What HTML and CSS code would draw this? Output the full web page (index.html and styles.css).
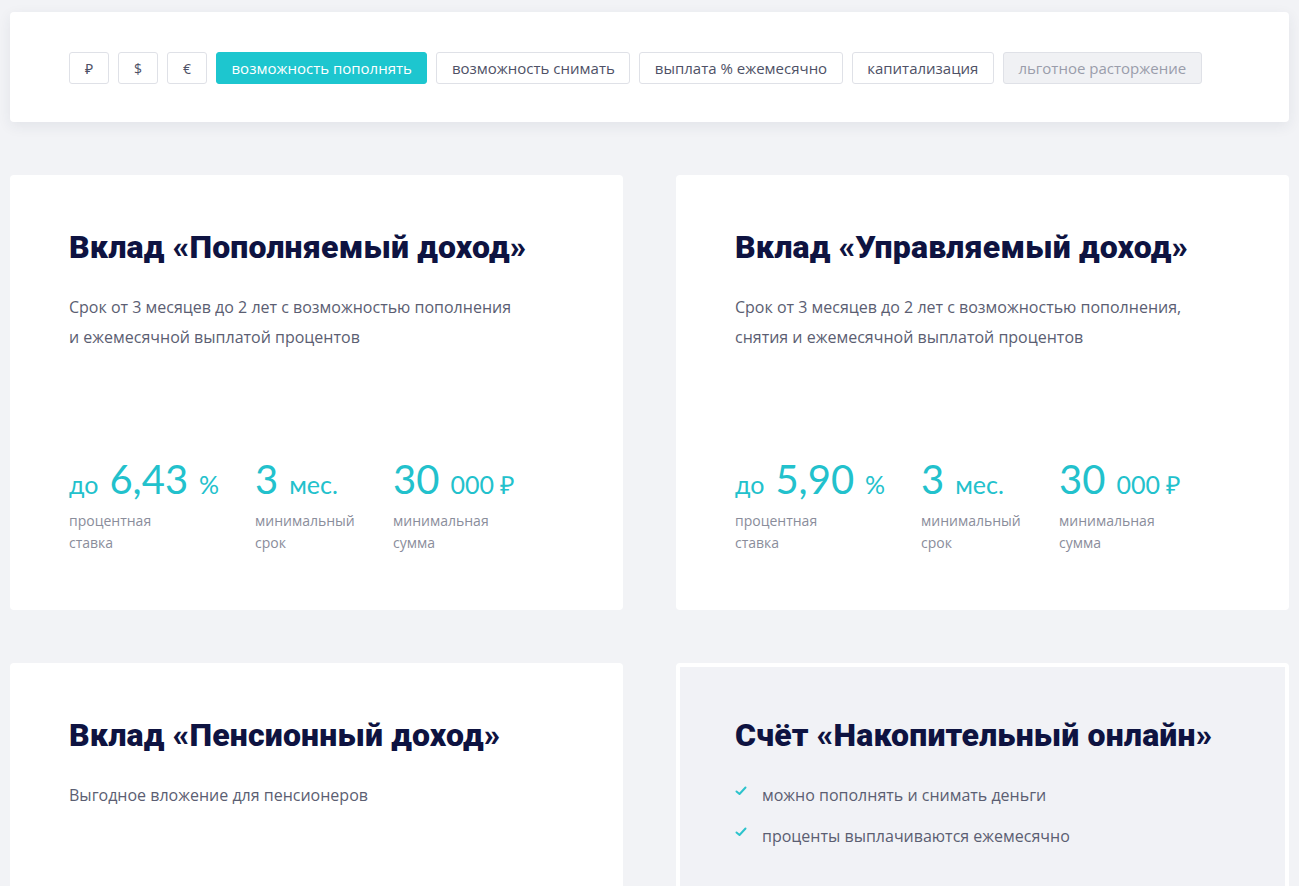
FILE: index.html
```html
<!DOCTYPE html>
<html lang="ru">
<head>
<meta charset="utf-8">
<title>Вклады</title>
<link rel="stylesheet" href="styles.css">
</head>
<body>
<div class="page">
  <div class="filters">
    <button class="chip chip-cur">₽</button>
    <button class="chip chip-cur">$</button>
    <button class="chip chip-cur">€</button>
    <button class="chip chip-active">возможность пополнять</button>
    <button class="chip">возможность снимать</button>
    <button class="chip">выплата % ежемесячно</button>
    <button class="chip">капитализация</button>
    <button class="chip chip-disabled">льготное расторжение</button>
  </div>

  <div class="grid">
    <div class="card">
      <h2 class="card-title">Вклад «Пополняемый доход»</h2>
      <p class="card-desc">Срок от 3 месяцев до 2 лет с возможностью пополнения<br>и ежемесячной выплатой процентов</p>
      <div class="stats">
        <div class="stat stat-rate">
          <div class="stat-value"><span class="small">до</span><span class="big">6,43</span><span class="small">%</span></div>
          <div class="stat-label">процентная<br>ставка</div>
        </div>
        <div class="stat stat-term">
          <div class="stat-value"><span class="big">3</span><span class="small">мес.</span></div>
          <div class="stat-label">минимальный<br>срок</div>
        </div>
        <div class="stat">
          <div class="stat-value"><span class="big">30</span><span class="small">000 ₽</span></div>
          <div class="stat-label">минимальная<br>сумма</div>
        </div>
      </div>
    </div>

    <div class="card">
      <h2 class="card-title">Вклад «Управляемый доход»</h2>
      <p class="card-desc">Срок от 3 месяцев до 2 лет с возможностью пополнения,<br>снятия и ежемесячной выплатой процентов</p>
      <div class="stats">
        <div class="stat stat-rate">
          <div class="stat-value"><span class="small">до</span><span class="big">5,90</span><span class="small">%</span></div>
          <div class="stat-label">процентная<br>ставка</div>
        </div>
        <div class="stat stat-term">
          <div class="stat-value"><span class="big">3</span><span class="small">мес.</span></div>
          <div class="stat-label">минимальный<br>срок</div>
        </div>
        <div class="stat">
          <div class="stat-value"><span class="big">30</span><span class="small">000 ₽</span></div>
          <div class="stat-label">минимальная<br>сумма</div>
        </div>
      </div>
    </div>

    <div class="card card-short">
      <h2 class="card-title">Вклад «Пенсионный доход»</h2>
      <p class="card-desc">Выгодное вложение для пенсионеров</p>
    </div>

    <div class="card card-short card-grey">
      <h2 class="card-title">Счёт «Накопительный онлайн»</h2>
      <ul class="checks">
        <li><svg class="tick" width="12" height="10" viewBox="0 0 12 10"><path d="M1.5 5.5 L4.5 8 L10.5 1.5" fill="none" stroke="#2cc3cc" stroke-width="2" stroke-linecap="round" stroke-linejoin="round"/></svg>можно пополнять и снимать деньги</li>
        <li><svg class="tick" width="12" height="10" viewBox="0 0 12 10"><path d="M1.5 5.5 L4.5 8 L10.5 1.5" fill="none" stroke="#2cc3cc" stroke-width="2" stroke-linecap="round" stroke-linejoin="round"/></svg>проценты выплачиваются ежемесячно</li>
      </ul>
    </div>
  </div>
</div>
</body>
</html>
```

FILE: styles.css
```css
* { box-sizing: border-box; }

html, body {
  margin: 0;
  padding: 0;
  background: #f2f3f6;
  font-family: "Open Sans", "Noto Sans", sans-serif;
  color: #5b5e72;
}

.page {
  padding: 12px 10px 0;
  height: 886px;
  overflow: hidden;
}

.filters {
  background: #ffffff;
  border-radius: 4px;
  box-shadow: 0 4px 14px rgba(40, 50, 80, 0.08);
  padding: 40px 59px 38px;
  display: flex;
  gap: 9px;
  align-items: center;
}

.chip {
  height: 32px;
  padding: 0 14.5px;
  border: 1px solid #dfe1e7;
  border-radius: 3px;
  background: #ffffff;
  font-family: "Open Sans", "Noto Sans", sans-serif;
  font-size: 15px;
  color: #4e5166;
  cursor: pointer;
  white-space: nowrap;
}

.chip-cur {
  width: 40px;
  padding: 0;
  font-size: 14px;
}

.chip-active {
  background: #1dc6cf;
  border-color: #1dc6cf;
  color: #ffffff;
}

.chip-disabled {
  background: #f0f1f4;
  color: #9a9dab;
}

.grid {
  margin-top: 53px;
  display: grid;
  grid-template-columns: 1fr 1fr;
  column-gap: 53px;
  row-gap: 53px;
}

.card {
  background: #ffffff;
  border-radius: 4px;
  padding: 52px 59px 56px;
  height: 435px;
  display: flex;
  flex-direction: column;
}

.card-short {
  height: auto;
  min-height: 300px;
}

.card-grey {
  background: #f1f2f6;
  border: 4px solid #ffffff;
  padding: 48px 55px;
}

.card-title {
  margin: 0;
  font-family: "Roboto", "Liberation Sans", sans-serif;
  font-weight: 900;
  font-size: 32px;
  line-height: 40px;
  color: #0e1341;
  letter-spacing: 0.2px;
}

.card-desc {
  margin: 25px 0 0;
  font-size: 16px;
  line-height: 30px;
  color: #5b5e72;
}

.stats {
  margin-top: auto;
  display: flex;
}

.stat-rate { width: 186px; }
.stat-term { width: 138px; }

.stat-value {
  font-family: "Lato", "Open Sans", sans-serif;
  color: #22c1cc;
  line-height: 44px;
  white-space: nowrap;
}

.stat-value .big {
  font-size: 40px;
}

.stat-value .small {
  font-size: 25px;
}

.stat-value span + span {
  margin-left: 11px;
}

.stat-label {
  margin-top: 0;
  font-size: 14px;
  line-height: 22px;
  color: #8a8d9b;
}

.checks {
  list-style: none;
  margin: 25px 0 0;
  padding: 0;
}

.checks li {
  font-size: 16px;
  line-height: 30px;
  color: #5b5e72;
  display: flex;
  align-items: center;
  margin-bottom: 11px;
}

.tick {
  margin-right: 15px;
  margin-top: -8px;
  flex: none;
}
```
